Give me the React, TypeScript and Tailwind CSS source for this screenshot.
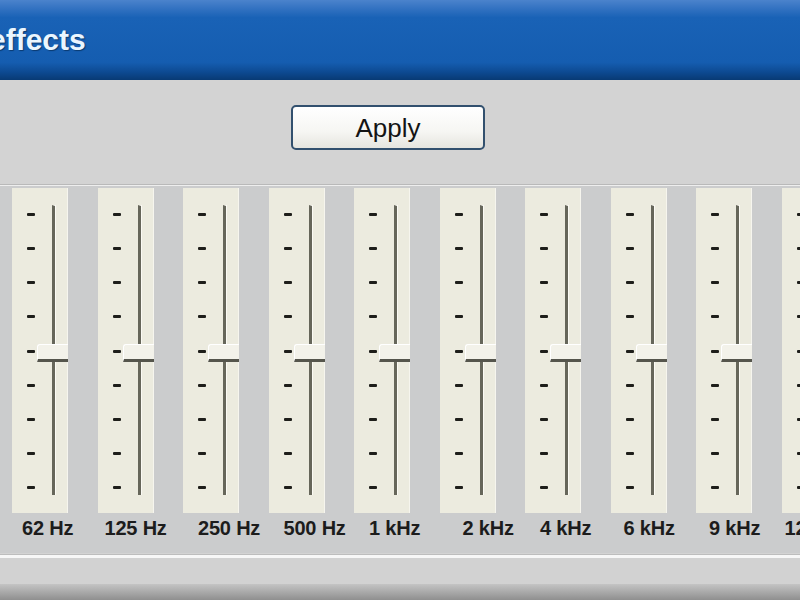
const bands = [
    { label: '62 Hz', pad: 'pl-[10px]' },
    { label: '125 Hz', pad: 'pl-[7px]' },
    { label: '250 Hz', pad: 'pl-[15px]' },
    { label: '500 Hz', pad: 'pl-[15px]' },
    { label: '1 kHz', pad: 'pl-[15px]' },
    { label: '2 kHz', pad: 'pl-[23px]' },
    { label: '4 kHz', pad: 'pl-[15px]' },
    { label: '6 kHz', pad: 'pl-[13px]' },
    { label: '9 kHz', pad: 'pl-[13px]' },
    { label: '12 kHz', pad: 'pl-[3px]' }
];

const ticks = [0, 1, 2, 3, 4, 5, 6, 7, 8];

const Slider = () => {
    return (
        <div className="flex h-[325px] w-[56px] shrink-0 border-r border-[#f6f5ee] bg-[#ecebdf] pl-[15px]">
            <div className="mt-[25px] mb-[24px] flex w-[8px] flex-col justify-between">
                {ticks.map((t) => (
                    <div key={t} className="h-[3px] w-[8px] rounded-[1px] bg-[#1e1e1a]" />
                ))}
            </div>
            <div className="relative mt-[17px] mb-[18px] ml-[17px] w-[4px] border-l-[3px] border-r border-l-[#66665a] border-r-[#fbfaf4] border-t border-t-[#fbfaf4]">
                <div className="absolute top-[138px] left-[-18px] h-[18px] w-[31px] rounded-tl-[3px] border-t border-l border-[#ffffff] border-b-[3px] border-b-[#55554c] bg-[#f3f2ea]" />
            </div>
        </div>
    );
};

const App = () => {
    return (
        <div className="flex h-[600px] w-[800px] flex-col overflow-hidden bg-[#d3d3d3] font-['Liberation_Sans',Arial,sans-serif]">
            <div className="flex h-[80px] items-center bg-[linear-gradient(to_bottom,#4b83cc_0%,#3473c2_10%,#1962b6_22%,#155db0_78%,#0d4a92_90%,#083a74_100%)]">
                <span className="ml-[-11px] text-[30px] leading-none font-bold text-[#eaf6ff] [text-shadow:1px_1px_1px_#0a3a70]">
                    effects
                </span>
            </div>
            <div className="flex pt-[25px] pl-[291px]">
                <button className="h-[45px] w-[194px] rounded-[5px] border-2 border-[#32506e] bg-[linear-gradient(to_bottom,#ffffff_0%,#f6f6f3_60%,#e6e5df_100%)] text-[26px] leading-none text-[#141414]">
                    Apply
                </button>
            </div>
            <div className="mt-[34px] h-[2px] border-t border-[#b9b9b9] bg-[#eeeeee]" />
            <div className="flex h-[367px] flex-col bg-[#cbcccd] pt-[2px]">
                <div className="flex gap-[29.5px] pl-[12px]">
                    {bands.map((b) => (
                        <Slider key={b.label} />
                    ))}
                </div>
                <div className="flex pl-[12px]">
                    {bands.map((b) => (
                        <div
                            key={b.label}
                            className={`w-[85.5px] shrink-0 whitespace-nowrap text-[20px] font-bold tracking-[-0.2px] text-[#1c1c1c] ${b.pad}`}
                        >
                            {b.label}
                        </div>
                    ))}
                </div>
            </div>
            <div className="mt-[1px] h-[4px] border-t border-[#bdbdbd] bg-[#f7f7f7]" />
            <div className="h-[26px] bg-[#d2d2d2]" />
            <div className="flex-1 bg-[linear-gradient(to_bottom,#c4c4c4,#8f8f8f)]" />
        </div>
    );
};

export default App;
